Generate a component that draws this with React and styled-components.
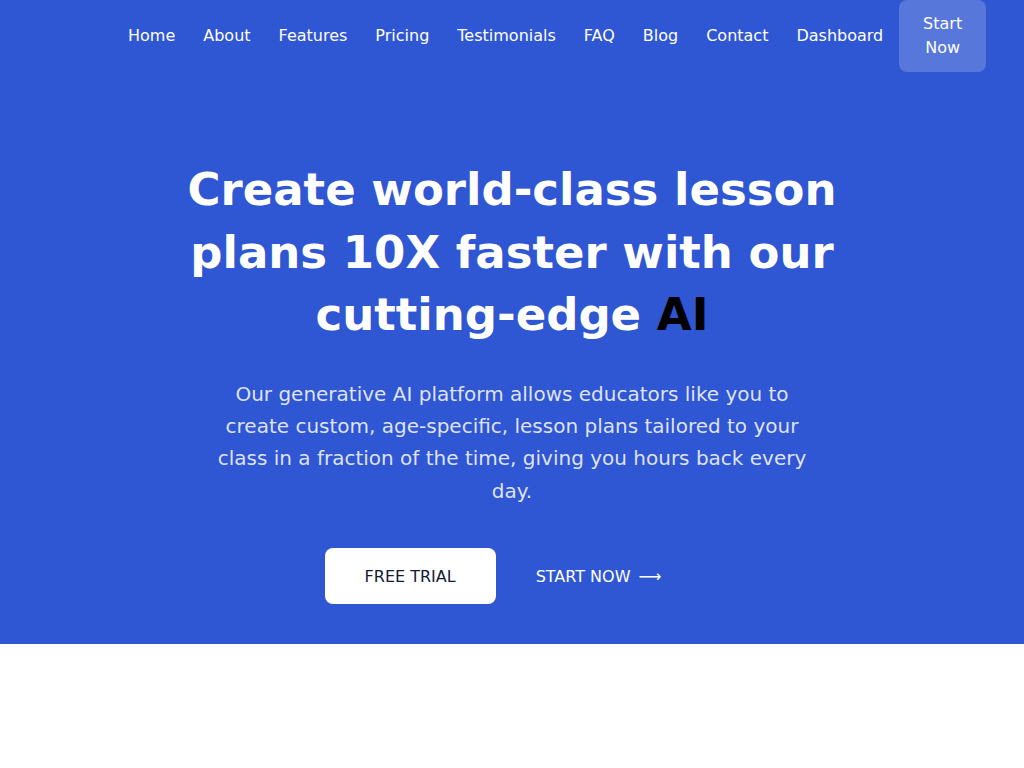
import React from 'react';
import styled, { createGlobalStyle } from 'styled-components';

const GlobalStyle = createGlobalStyle`
  * { box-sizing: border-box; }
  body {
    margin: 0;
    background: #ffffff;
    font-family: "DejaVu Sans", "Liberation Sans", sans-serif;
  }
`

const Hero = styled.section`
  background: #2f56d3;
  color: white;
  padding-bottom: 40px;
`

const Nav = styled.nav`
  display: flex;
  align-items: center;
  height: 72px;
  padding: 0 38px 0 128px;
`

const NavLinks = styled.ul`
  display: flex;
  align-items: center;
  gap: 28px;
  list-style: none;
  margin: 0 0 2px;
  padding: 0;
`

const NavLink = styled.a`
  color: white;
  font-size: 16px;
  text-decoration: none;
`

const NavButton = styled.a`
  margin-left: 16px;
  width: 87px;
  padding: 12px 20px;
  border-radius: 8px;
  background: rgba(255, 255, 255, 0.2);
  color: white;
  font-size: 16px;
  line-height: 24px;
  text-align: center;
  text-decoration: none;
`

const Content = styled.div`
  display: flex;
  flex-direction: column;
  align-items: center;
  padding-top: 87px;
  text-align: center;
`

const Title = styled.h1`
  max-width: 680px;
  margin: 0;
  font-size: 45px;
  font-weight: bold;
  line-height: 62.5px;
`

const Highlight = styled.span`
  color: #000;
`

const Lead = styled.p`
  max-width: 600px;
  margin: 31px 0 0;
  font-size: 20px;
  line-height: 32.4px;
  color: rgba(255, 255, 255, 0.85);
`

const Actions = styled.div`
  display: flex;
  align-items: center;
  gap: 40px;
  margin-top: 41px;
  margin-right: 38px;
`

const PrimaryButton = styled.a`
  display: flex;
  align-items: center;
  height: 56px;
  padding: 0 40px;
  border-radius: 8px;
  background: white;
  color: #141a33;
  font-size: 16px;
  text-decoration: none;
`

const TextButton = styled.a`
  display: flex;
  align-items: center;
  gap: 8px;
  color: white;
  font-size: 16px;
  text-decoration: none;
`

const links = ['Home', 'About', 'Features', 'Pricing', 'Testimonials', 'FAQ', 'Blog', 'Contact', 'Dashboard'];

const App = () => {
  return (
    <>
      <GlobalStyle />
      <Hero>
        <Nav>
          <NavLinks>
            {links.map(link => (
              <li key={link}><NavLink href="#">{link}</NavLink></li>
            ))}
          </NavLinks>
          <NavButton href="#">Start Now</NavButton>
        </Nav>
        <Content>
          <Title>
            Create world-class lesson plans 10X faster with our cutting-edge <Highlight>AI</Highlight>
          </Title>
          <Lead>
            Our generative AI platform allows educators like you to create custom, age-specific, lesson plans tailored to your class in a fraction of the time, giving you hours back every day.
          </Lead>
          <Actions>
            <PrimaryButton href="#">FREE TRIAL</PrimaryButton>
            <TextButton href="#">START NOW <span>⟶</span></TextButton>
          </Actions>
        </Content>
      </Hero>
    </>
  );
};

export default App;
